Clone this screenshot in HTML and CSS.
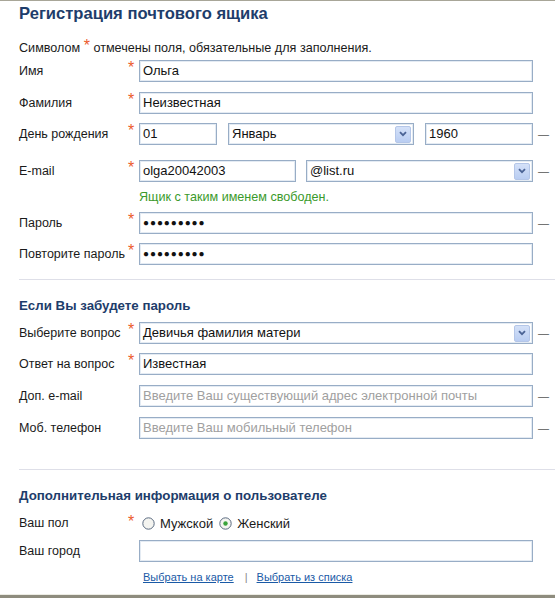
FILE: index.html
```html
<!DOCTYPE html>
<html lang="ru">
<head>
<meta charset="utf-8">
<title>Регистрация почтового ящика</title>
<link rel="stylesheet" href="styles.css">
</head>
<body>
<div class="frame">
  <h1 class="title">Регистрация почтового ящика</h1>
  <p class="note">Символом <span class="star">*</span> отмечены поля, обязательные для заполнения.</p>

  <div class="row r-name">
    <label class="lbl">Имя</label><span class="star">*</span>
    <div class="fields"><div class="inp w-full">Ольга</div></div><span class="dash"></span>
  </div>
  <div class="row r-surname">
    <label class="lbl">Фамилия</label><span class="star">*</span>
    <div class="fields"><div class="inp w-full">Неизвестная</div></div><span class="dash"></span>
  </div>
  <div class="row r-birth">
    <label class="lbl">День рождения</label><span class="star">*</span>
    <div class="fields gap11">
      <div class="inp w-day">01</div>
      <div class="sel w-month"><span class="sel-text">Январь</span><span class="arrow"><svg width="8" height="6" viewBox="0 0 8 6"><path d="M1 1.2 L4 4.2 L7 1.2" fill="none" stroke="#4a6395" stroke-width="1.8"/></svg></span></div>
      <div class="inp w-year">1960</div>
    </div><span class="dash">—</span>
  </div>
  <div class="row r-email">
    <label class="lbl">E-mail</label><span class="star">*</span>
    <div class="fields gap10">
      <div class="inp w-login">olga20042003</div>
      <div class="sel w-domain"><span class="sel-text">@list.ru</span><span class="arrow"><svg width="8" height="6" viewBox="0 0 8 6"><path d="M1 1.2 L4 4.2 L7 1.2" fill="none" stroke="#4a6395" stroke-width="1.8"/></svg></span></div>
    </div><span class="dash">—</span>
  </div>
  <p class="ok">Ящик с таким именем свободен.</p>
  <div class="row r-pass">
    <label class="lbl">Пароль</label><span class="star">*</span>
    <div class="fields"><div class="inp w-full dots">●●●●●●●●●</div></div><span class="dash">—</span>
  </div>
  <div class="row r-pass2">
    <label class="lbl">Повторите пароль</label><span class="star">*</span>
    <div class="fields"><div class="inp w-full dots">●●●●●●●●●</div></div><span class="dash"></span>
  </div>

  <hr class="sep sep1">
  <h2 class="sub">Если Вы забудете пароль</h2>
  <div class="row r-q">
    <label class="lbl">Выберите вопрос</label><span class="star">*</span>
    <div class="fields"><div class="sel w-full"><span class="sel-text">Девичья фамилия матери</span><span class="arrow"><svg width="8" height="6" viewBox="0 0 8 6"><path d="M1 1.2 L4 4.2 L7 1.2" fill="none" stroke="#4a6395" stroke-width="1.8"/></svg></span></div></div><span class="dash">—</span>
  </div>
  <div class="row r-a">
    <label class="lbl">Ответ на вопрос</label><span class="star">*</span>
    <div class="fields"><div class="inp w-full">Известная</div></div><span class="dash"></span>
  </div>
  <div class="row r-alt">
    <label class="lbl">Доп. e-mail</label><span class="star"></span>
    <div class="fields"><div class="inp w-full ph">Введите Ваш существующий адрес электронной почты</div></div><span class="dash">—</span>
  </div>
  <div class="row r-phone">
    <label class="lbl">Моб. телефон</label><span class="star"></span>
    <div class="fields"><div class="inp w-full ph">Введите Ваш мобильный телефон</div></div><span class="dash">—</span>
  </div>

  <hr class="sep sep2">
  <h2 class="sub">Дополнительная информация о пользователе</h2>
  <div class="row r-sex">
    <label class="lbl">Ваш пол</label><span class="star">*</span>
    <div class="fields radios">
      <span class="radio"><svg width="13" height="13" viewBox="0 0 13 13"><circle cx="6.5" cy="6.5" r="5.7" fill="#f4f4f0" stroke="#5a6a80" stroke-width="1"/></svg>Мужской</span>
      <span class="radio"><svg width="13" height="13" viewBox="0 0 13 13"><circle cx="6.5" cy="6.5" r="5.7" fill="#f4f4f0" stroke="#5a6a80" stroke-width="1"/><circle cx="6.5" cy="6.5" r="2.2" fill="#3aa33a"/></svg>Женский</span>
    </div>
  </div>
  <div class="row r-city">
    <label class="lbl">Ваш город</label><span class="star"></span>
    <div class="fields"><div class="inp w-full"></div></div><span class="dash"></span>
  </div>
  <div class="links">
    <a href="#" class="lnk">Выбрать на карте</a><span class="bar">|</span><a href="#" class="lnk">Выбрать из списка</a>
  </div>
</div>
</body>
</html>
```
FILE: styles.css
```css
* { box-sizing: border-box; }
html, body { margin: 0; padding: 0; background: #fff; }
body { font-family: "Liberation Sans", Arial, sans-serif; color: #1a1a1a; }

.frame {
  width: 555px;
  height: 598px;
  border-top: 1px solid #a8a698;
  border-bottom: 3px solid #8e8c7e;
  box-shadow: inset 0 -1px 0 #ecece4;
  padding: 0 0 0 19px;
  overflow: hidden;
}

.title {
  margin: 3px 0 0 0;
  font-size: 16.6px;
  line-height: 20px;
  font-weight: bold;
  color: #1e3d6b;
}

.note {
  margin: 17px 0 0 0;
  font-size: 12.6px;
  line-height: 14px;
}

.star {
  color: #ec5b2b;
  font-size: 16px;
  line-height: 10px;
  align-self: start;
}
.note .star { vertical-align: 1px; }

.row {
  display: grid;
  grid-template-columns: 109px 11px 394px 5px 10px;
  align-items: center;
  height: 22px;
}
.row .star { grid-column: 2; padding-top: 3px; }
.row .fields { grid-column: 3; display: flex; }
.row .dash { grid-column: 5; font-size: 11px; color: #555; line-height: 1; }
.row .dash:empty { visibility: hidden; }

.lbl { font-size: 12.5px; line-height: 14px; white-space: nowrap; }

.r-name { margin-top: 5px; }
.r-surname { margin-top: 10px; }
.r-birth { margin-top: 9px; }
.r-email { margin-top: 15px; }
.r-pass { margin-top: 8px; }
.r-pass2 { margin-top: 9px; }

.r-q { margin-top: 8px; }
.r-a { margin-top: 9px; }
.r-alt { margin-top: 10px; }
.r-phone { margin-top: 10px; }

.r-sex { margin-top: 10px; height: 18px; }
.r-city { margin-top: 8px; }

.gap11 { gap: 11px; }
.gap10 { gap: 10px; }

.inp, .sel {
  height: 22px;
  border: 1px solid #98adc6;
  box-shadow: inset 0 0 0 1px #e4ebf3;
  background: #fff;
  font-size: 13px;
  line-height: 20px;
  padding: 0 3px;
  color: #111;
  white-space: nowrap;
  overflow: hidden;
}
.w-full { width: 394px; }
.w-day { width: 78px; }
.w-month { width: 186px; }
.w-year { width: 108px; }
.w-login { width: 157px; }
.w-domain { width: 227px; }

.sel { display: flex; align-items: center; justify-content: space-between; padding-right: 2px; }
.sel-text { flex: 1; }
.arrow {
  width: 16px;
  height: 17px;
  background: linear-gradient(#d4e1f8, #b9cdf2);
  border: 1px solid #b4c6e8;
  border-radius: 2px;
  display: flex;
  align-items: center;
  justify-content: center;
}

.dots { font-size: 10px; letter-spacing: 0.9px; }
.ph { color: #a0a0a0; }

.ok {
  margin: 8px 0 0 120px;
  font-size: 12.6px;
  line-height: 14px;
  color: #3b9a2b;
}

.sep {
  margin: 0;
  border: 0;
  height: 1px;
  background: #dedfe8;
}
.sep1 { margin-top: 14px; }
.sep2 { margin-top: 30px; }

.sub {
  margin: 18px 0 0 0;
  font-size: 13.3px;
  line-height: 16px;
  font-weight: bold;
  color: #1e3d6b;
}

.radios { align-items: center; gap: 6px; padding-left: 3px; font-size: 13px; }
.radio { display: inline-flex; align-items: center; gap: 5px; }

.links {
  margin: 8px 0 0 124px;
  font-size: 11px;
  line-height: 14px;
}
.lnk { color: #1a5aa6; text-decoration: underline; }
.bar { color: #888; margin: 0 9px 0 11px; }
```
